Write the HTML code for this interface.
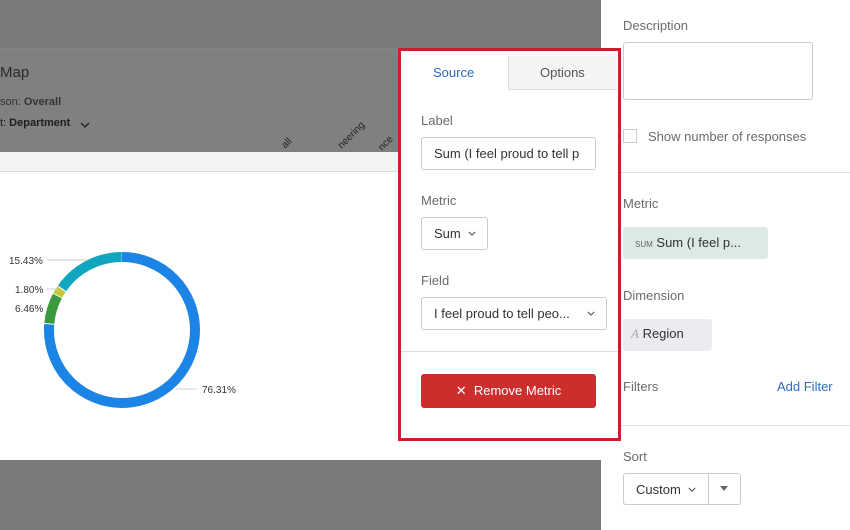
<!DOCTYPE html>
<html><head><style>
*{box-sizing:border-box;margin:0;padding:0}
body{width:850px;height:530px;overflow:hidden;position:relative;font-family:"Liberation Sans",sans-serif;background:#7b7b7b;color:#333}
.a{position:absolute}
.lbl{font-size:13px;color:#6b6b6b}
.chev{position:absolute;width:10px;height:6px}
</style></head><body>
<div class="a" style="left:0;top:0;width:601px;height:530px;background:#7a7a7a"></div>
<div class="a" style="left:0;top:48px;width:601px;height:104px;background:#808080;border-top:1px solid #858585"></div>
<div class="a" style="left:0;top:64px;font-size:15px;color:#2a2a2a">Map</div>
<div class="a" style="left:0;top:96px;font-size:11px;color:#333">son: <b>Overall</b></div>
<div class="a" style="left:0;top:117px;font-size:11px;color:#1e1e1e">t: <b>Department</b></div>
<svg class="chev" style="left:80px;top:122px" viewBox="0 0 10 6"><path d="M1 1L5 5L9 1" stroke="#222" stroke-width="1.3" fill="none"/></svg>
<div class="a" style="left:282px;top:138px;font-size:10px;color:#222;transform:rotate(-45deg)">all</div>
<div class="a" style="left:335px;top:130px;font-size:10px;color:#222;transform:rotate(-45deg)">neering</div>
<div class="a" style="left:378px;top:138px;font-size:10px;color:#222;transform:rotate(-45deg)">nce</div>
<div class="a" style="left:0;top:152px;width:601px;height:308px;background:#fff"></div>
<div class="a" style="left:0;top:152px;width:601px;height:20px;background:#f3f3f6;border-bottom:1px solid #ddd"></div>
<svg class="a" style="left:0;top:240px" width="260" height="180">
<g transform="translate(122,90) rotate(-90)" fill="none" stroke-width="10">
<circle r="73" stroke="#1b84e4" stroke-dasharray="349.5 500"/>
<circle r="73" stroke="#3c9a3e" stroke-dasharray="0 350.5 28.6 500"/>
<circle r="73" stroke="#c5c83a" stroke-dasharray="0 380 7.2 500"/>
<circle r="73" stroke="#10a6bf" stroke-dasharray="0 388.2 70 500"/>
</g>
<g stroke="#ccc" stroke-width="1"><line x1="47" y1="20" x2="88" y2="20"/><line x1="46" y1="49" x2="58" y2="49"/><line x1="176" y1="149" x2="197" y2="149"/></g>
<g font-size="10" fill="#333"><text x="9" y="24">15.43%</text><text x="15" y="53">1.80%</text><text x="15" y="72">6.46%</text><text x="202" y="153">76.31%</text></g>
</svg>
<!-- right panel -->
<div class="a" style="left:601px;top:0;width:249px;height:530px;background:#fff"></div>
<div class="a lbl" style="left:623px;top:18px">Description</div>
<div class="a" style="left:623px;top:42px;width:190px;height:58px;border:1px solid #ccc;border-radius:3px"></div>
<div class="a" style="left:623px;top:129px;width:14px;height:14px;border:1px solid #ccc"></div>
<div class="a lbl" style="left:648px;top:129px">Show number of responses</div>
<div class="a" style="left:601px;top:172px;width:249px;height:1px;background:#e3e3e3"></div>
<div class="a lbl" style="left:623px;top:196px">Metric</div>
<div class="a" style="left:623px;top:227px;width:145px;height:32px;background:#dde9e3;border-radius:3px;font-size:13px;color:#333;padding:8px 12px"><span style="font-size:8px;color:#666">SUM</span> Sum (I feel p...</div>
<div class="a lbl" style="left:623px;top:288px">Dimension</div>
<div class="a" style="left:623px;top:319px;width:89px;height:32px;background:#ececf0;border-radius:3px;font-size:13px;color:#333;padding:7px 8px"><i style="color:#aaa;font-family:'Liberation Serif',serif">A</i> Region</div>
<div class="a lbl" style="left:623px;top:379px">Filters</div>
<div class="a" style="left:777px;top:379px;font-size:13px;color:#2c6bc0">Add Filter</div>
<div class="a" style="left:601px;top:425px;width:249px;height:1px;background:#e3e3e3"></div>
<div class="a lbl" style="left:623px;top:449px">Sort</div>
<div class="a" style="left:623px;top:473px;width:118px;height:32px;border:1px solid #ccc;border-radius:3px"></div>
<div class="a" style="left:708px;top:473px;width:1px;height:32px;background:#ccc"></div>
<div class="a" style="left:636px;top:482px;font-size:13px;color:#333">Custom</div>
<svg class="chev" style="left:688px;top:487px;width:8px;height:5px" viewBox="0 0 10 6"><path d="M1 1L5 5L9 1" stroke="#555" stroke-width="1.3" fill="none"/></svg>
<div class="a" style="left:720px;top:486px;width:0;height:0;border-left:4px solid transparent;border-right:4px solid transparent;border-top:5px solid #666"></div>
<!-- popup -->
<div class="a" style="left:398px;top:48px;width:223px;height:393px;background:#fff;border:3px solid #c8202f"></div>
<div class="a" style="left:508px;top:56px;width:109px;height:34px;background:#f4f4f6;border-left:1px solid #ddd;border-bottom:1px solid #ddd"></div>
<div class="a" style="left:433px;top:65px;font-size:13px;color:#2c6bc0">Source</div>
<div class="a" style="left:540px;top:65px;font-size:13px;color:#555">Options</div>
<div class="a lbl" style="left:421px;top:113px">Label</div>
<div class="a" style="left:421px;top:137px;width:175px;height:33px;border:1px solid #ccc;border-radius:3px;font-size:13px;color:#333;padding:8px 12px;white-space:nowrap;overflow:hidden">Sum (I feel proud to tell p</div>
<div class="a lbl" style="left:421px;top:193px">Metric</div>
<div class="a" style="left:421px;top:217px;width:67px;height:33px;border:1px solid #ccc;border-radius:3px;font-size:13px;color:#333;padding:8px 12px;white-space:nowrap">Sum</div>
<svg class="chev" style="left:468px;top:231px;width:8px;height:5px" viewBox="0 0 10 6"><path d="M1 1L5 5L9 1" stroke="#555" stroke-width="1.3" fill="none"/></svg>
<div class="a lbl" style="left:421px;top:273px">Field</div>
<div class="a" style="left:421px;top:297px;width:186px;height:33px;border:1px solid #ccc;border-radius:3px;font-size:13px;color:#333;padding:8px 12px;white-space:nowrap">I feel proud to tell peo...</div>
<svg class="chev" style="left:587px;top:311px;width:8px;height:5px" viewBox="0 0 10 6"><path d="M1 1L5 5L9 1" stroke="#555" stroke-width="1.3" fill="none"/></svg>
<div class="a" style="left:401px;top:351px;width:217px;height:1px;background:#ddd"></div>
<div class="a" style="left:421px;top:374px;width:175px;height:34px;background:#cc2e2e;border-radius:3px;color:#fff;font-size:13px;text-align:center;line-height:34px">✕ &nbsp;Remove Metric</div>
</body></html>
